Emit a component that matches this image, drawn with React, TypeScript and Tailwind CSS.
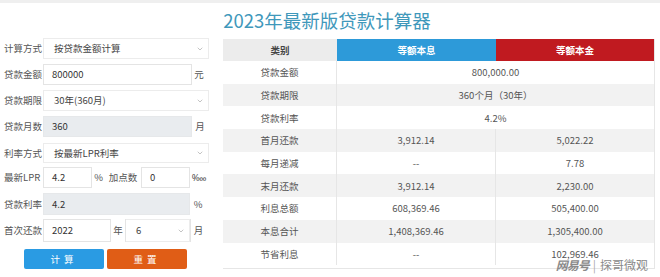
import { ChevronDown } from "lucide-react";

const FONT = { fontFamily: '"Noto Sans CJK SC", "Noto Sans", sans-serif' };

interface Row {
  label: string;
  a: string;
  b?: string;
}

const ROWS: Row[] = [
  { label: "贷款金额", a: "800,000.00" },
  { label: "贷款期限", a: "360个月（30年）" },
  { label: "贷款利率", a: "4.2%" },
  { label: "首月还款", a: "3,912.14", b: "5,022.22" },
  { label: "每月递减", a: "--", b: "7.78" },
  { label: "末月还款", a: "3,912.14", b: "2,230.00" },
  { label: "利息总额", a: "608,369.46", b: "505,400.00" },
  { label: "本息合计", a: "1,408,369.46", b: "1,305,400.00" },
  { label: "节省利息", a: "--", b: "102,969.46" },
];

function Label({ children }: { children: React.ReactNode }) {
  return <span className="w-[43px] shrink-0 pl-[4px] text-[9.5px] text-[#555]">{children}</span>;
}

function Select({ value, className }: { value: string; className: string }) {
  return (
    <div
      className={`flex h-full items-center justify-between border border-[#ececec] bg-white pr-[4px] pl-[10px] text-[9.5px] text-[#444] ${className}`}
    >
      <span>{value}</span>
      <ChevronDown className="size-[8px] text-[#888]" strokeWidth={1.5} />
    </div>
  );
}

function Input({
  value,
  className,
  gray = false,
}: {
  value: string;
  className: string;
  gray?: boolean;
}) {
  return (
    <div
      className={`flex h-full items-center border border-[#e4e4e4] pl-[8px] text-[9.5px] text-[#333] ${
        gray ? "border-[#e6e8ea] bg-[#e9ecef]" : "bg-white"
      } ${className}`}
    >
      {value}
    </div>
  );
}

function Unit({ children, className = "" }: { children: React.ReactNode; className?: string }) {
  return (
    <span className={`flex h-full items-center justify-center text-[9.5px] text-[#555] ${className}`}>
      {children}
    </span>
  );
}

function FormPanel() {
  return (
    <div className="flex w-[215px] shrink-0 flex-col">
      <div className="flex h-[21px] items-center">
        <Label>计算方式</Label>
        <Select value="按贷款金额计算" className="w-[166px]" />
      </div>
      <div className="mt-[5px] flex h-[21px] items-center">
        <Label>贷款金额</Label>
        <Input value="800000" className="w-[149px]" />
        <Unit className="w-[14px]">元</Unit>
      </div>
      <div className="mt-[5px] flex h-[21px] items-center">
        <Label>贷款期限</Label>
        <Select value="30年(360月)" className="w-[166px]" />
      </div>
      <div className="mt-[5px] flex h-[21px] items-center">
        <Label>贷款月数</Label>
        <Input value="360" gray className="w-[149px]" />
        <Unit className="w-[16px]">月</Unit>
      </div>
      <div className="mt-[6px] flex h-[20px] items-center">
        <Label>利率方式</Label>
        <Select value="按最新LPR利率" className="w-[166px]" />
      </div>
      <div className="mt-[4px] flex h-[21px] items-center">
        <Label>最新LPR</Label>
        <Input value="4.2" className="w-[49px]" />
        <Unit className="w-[13px]">%</Unit>
        <Unit className="w-[36px]">加点数</Unit>
        <Input value="0" className="w-[49px]" />
        <Unit className="w-[18px]">‱</Unit>
      </div>
      <div className="mt-[5px] flex h-[22px] items-center">
        <Label>贷款利率</Label>
        <Input value="4.2" gray className="w-[147px]" />
        <Unit className="w-[16px]">%</Unit>
      </div>
      <div className="mt-[4px] flex h-[23px] items-center">
        <Label>首次还款</Label>
        <Input value="2022" className="w-[67px] border-r-0" />
        <Unit className="w-[16px] border-x border-[#e4e4e4]">年</Unit>
        <Select value="6" className="w-[64px] border-l-0" />
        <Unit className="w-[16px] border-l border-[#e4e4e4]">月</Unit>
      </div>
      <div className="mt-[7px] flex h-[20px] gap-[3px] pl-[24px]">
        <button className="w-[80px] rounded-[2px] bg-[#2a9be3] text-[9.5px] tracking-[4px] text-white">
          计算
        </button>
        <button className="w-[80px] rounded-[2px] bg-[#e05d16] text-[9.5px] tracking-[4px] text-white">
          重置
        </button>
      </div>
    </div>
  );
}

function ResultTable() {
  return (
    <div className="mt-[1px] ml-[8px] w-[432px] border-r border-b border-[#e6e6e6] text-[9.5px] text-[#555]">
      <div className="flex h-[22px] items-center font-bold">
        <div className="flex h-full w-[114px] items-center justify-center bg-[#ececec] text-[#444]">
          类别
        </div>
        <div className="flex h-full w-[159px] items-center justify-center bg-[#2d9ad9] text-white">
          等额本息
        </div>
        <div className="flex h-full flex-1 items-center justify-center bg-[#c01a20] text-white">
          等额本金
        </div>
      </div>
      {ROWS.map((r, i) => (
        <div
          key={r.label}
          className={`flex h-[22.7px] items-center ${i % 2 === 0 ? "bg-white" : "bg-[#f2f2f2]"}`}
        >
          <div className="flex h-full w-[114px] items-center justify-center border-r border-[#e6e6e6]">
            {r.label}
          </div>
          {r.b === undefined ? (
            <div className="flex h-full flex-1 items-center justify-center">{r.a}</div>
          ) : (
            <>
              <div className="flex h-full w-[159px] items-center justify-center border-r border-[#e6e6e6]">
                {r.a}
              </div>
              <div className="flex h-full flex-1 items-center justify-center">{r.b}</div>
            </>
          )}
        </div>
      ))}
    </div>
  );
}

export default function App() {
  return (
    <div className="relative h-[277px] w-[660px] overflow-hidden bg-white" style={FONT}>
      <div className="h-[3px] bg-[#efefef]" />
      <div className="flex h-[35px] items-center justify-center pr-[6px] text-[18.5px] text-[#3f98bb]">
        2023年最新版贷款计算器
      </div>
      <div className="flex">
        <FormPanel />
        <ResultTable />
      </div>
      <div className="absolute right-[12px] bottom-[6px] flex items-center gap-[4px] text-[12px] leading-none text-[#8a8a8a]">
        <span className="font-bold tracking-[-1px] italic">网易号</span>
        <span className="text-[#aaa]">|</span>
        <span>探哥微观</span>
      </div>
    </div>
  );
}
